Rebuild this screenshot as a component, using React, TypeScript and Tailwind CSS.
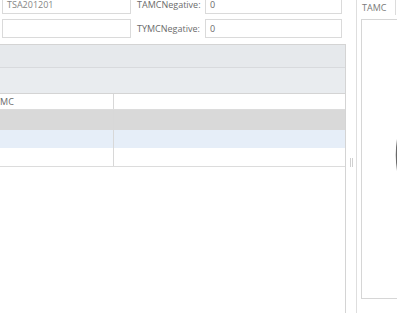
import React from 'react';

const rows = [
  { bg: 'bg-[#d9d9d9]', h: 'h-[20px]' },
  { bg: 'bg-[#e6eef8]', h: 'h-[18px]' },
  { bg: 'bg-white', h: 'h-[18px]' },
];

const App: React.FC = () => {
  return (
    <div className="w-[397px] h-[313px] overflow-hidden bg-white flex font-['Open_Sans',sans-serif] text-[9px] text-[#6b6b6b]">
      {/* left side: form + grid */}
      <div className="w-[346px] flex flex-col shrink-0">
        <div className="h-[44px] shrink-0 overflow-hidden">
          <div className="-mt-[5px] flex flex-col gap-[5px]">
            <div className="flex items-center">
              <div className="ml-[2px] w-[129px] h-[19px] border border-[#dadada] bg-white flex items-center px-[4px] text-[#858585]">
                TSA201201
              </div>
              <span className="ml-[6px] w-[68px] leading-none">TAMCNegative:</span>
              <div className="w-[137px] h-[19px] border border-[#dadada] flex items-center px-[4px]">0</div>
            </div>
            <div className="flex items-center">
              <div className="ml-[2px] w-[129px] h-[19px] border border-[#dadada] bg-white" />
              <span className="ml-[6px] w-[68px] leading-none">TYMCNegative:</span>
              <div className="w-[137px] h-[19px] border border-[#dadada] flex items-center px-[4px]">0</div>
            </div>
          </div>
        </div>

        <div className="flex-1 border-t border-r border-[#d4d4d4] flex flex-col">
          <div className="h-[23px] bg-[#e6e9ec] border-b border-[#d8dadd]" />
          <div className="h-[26px] bg-[#e9ecef] border-b border-[#d4d4d4]" />
          <div className="flex h-[16px] border-b border-[#dcdcdc]">
            <div className="w-[114px] border-r border-[#d8d8d8] flex items-center overflow-hidden">
              <span className="-ml-[5px] whitespace-nowrap">YMC</span>
            </div>
            <div className="flex-1" />
          </div>
          {rows.map((r, i) => (
            <div key={i} className={`flex ${r.h} ${r.bg}`}>
              <div className="w-[114px] border-r border-[#d8d8d8]" />
              <div className="flex-1" />
            </div>
          ))}
          <div className="border-t border-[#dcdcdc]" />
        </div>
      </div>

      {/* splitter */}
      <div className="w-[11px] shrink-0 border-r border-[#dedede] relative">
        <div className="absolute left-[4px] top-[158px] w-[3px] h-[9px] border-x border-[#d0d0d0]" />
      </div>

      {/* right panel */}
      <div className="flex-1 flex flex-col pl-[4px] relative overflow-hidden">
        <div className="h-[19px] flex items-start">
          <div className="w-[35px] h-[15px] border-r border-[#dcdcdc] pt-[1px] pl-[1px] text-[#7a7a7a]">TAMC</div>
        </div>
        <div className="h-[280px] border-l border-t border-b border-[#d6d6d6] relative overflow-hidden">
          <svg className="absolute left-[30px] top-[30px]" width="210" height="210" viewBox="0 0 210 210">
            <circle cx="105" cy="105" r="100" fill="none" stroke="#6a6a6a" strokeWidth="2.5" />
          </svg>
        </div>
      </div>
    </div>
  );
};

export default App;
